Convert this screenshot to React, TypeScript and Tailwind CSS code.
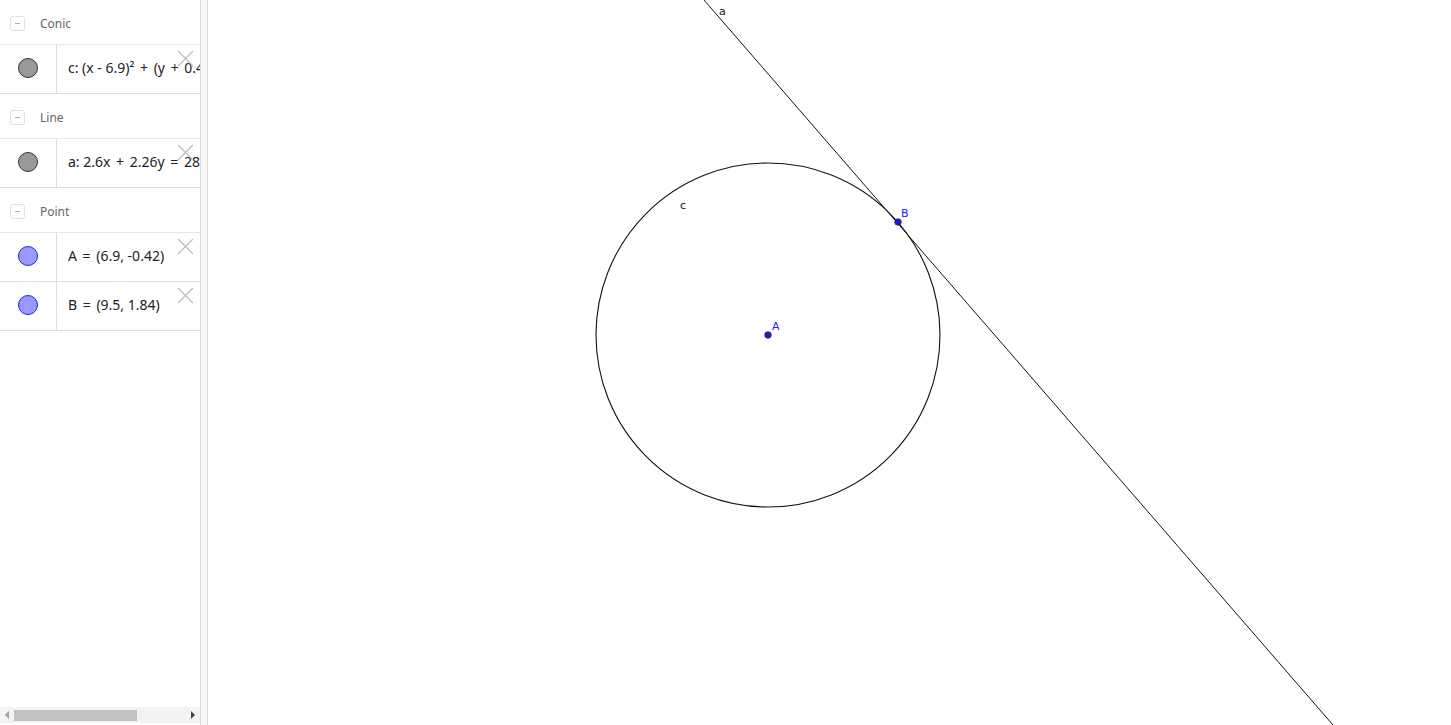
import React from 'react'

// ── Algebra view data ─────────────────────────────────────────────────────────
type Item = { text: string; kind: 'conic' | 'point' }
type Group = { title: string; items: Item[] }

const groups: Group[] = [
  { title: 'Conic', items: [{ text: 'c: (x - 6.9)² + (y + 0.42)² = 29.66', kind: 'conic' }] },
  { title: 'Line', items: [{ text: 'a: 2.6x + 2.26y = 28.8', kind: 'conic' }] },
  {
    title: 'Point',
    items: [
      { text: 'A = (6.9, -0.42)', kind: 'point' },
      { text: 'B = (9.5, 1.84)', kind: 'point' },
    ],
  },
]

// operators get a little extra room, like the math rendering in the reference
function Formula({ text }: { text: string }) {
  const parts = text.split(/( [+=] )/)
  return (
    <span>
      {parts.map((p, i) =>
        p === ' + ' || p === ' = ' ? (
          <span key={i} className="mx-[2px]">
            {p}
          </span>
        ) : (
          <span key={i}>{p}</span>
        ),
      )}
    </span>
  )
}

function Toggle() {
  return (
    <div className="w-[15px] h-[15px] rounded-[3px] border border-[#e0e0e0] flex items-center justify-center">
      <div className="w-[5px] h-px bg-[#b0b0b0]" />
    </div>
  )
}

function DeleteX() {
  return (
    <svg width="17" height="17" viewBox="0 0 17 17" className="absolute right-[6px] top-[5px]">
      <path d="M1 1 L16 16 M16 1 L1 16" stroke="#bdbdbd" strokeWidth="1.3" />
    </svg>
  )
}

function Row({ item }: { item: Item }) {
  const icon =
    item.kind === 'point'
      ? 'bg-[#9999ff] border-[#2222ee]'
      : 'bg-[#999999] border-[#333333]'
  return (
    <div className="relative h-[49px] flex pb-[3px] border-b border-[#dedede]">
      <div className="w-[57px] shrink-0 flex items-center justify-center border-r border-[#dedede] -mb-[3px] pb-[3px]">
        <div className={`w-[20px] h-[20px] rounded-full border ${icon}`} />
      </div>
      <div className="flex-1 overflow-hidden whitespace-nowrap flex items-center pl-[11px] text-[14px] text-[#222]">
        <Formula text={item.text} />
      </div>
      <DeleteX />
    </div>
  )
}

function AlgebraView() {
  return (
    <div className="w-[200px] shrink-0 h-full flex flex-col bg-white">
      <div className="flex-1 overflow-hidden">
        {groups.map((g) => (
          <div key={g.title}>
            <div className="h-[45px] flex items-center gap-[15px] pl-[10px] pt-[3px] border-b border-[#e6e6e6] text-[12px] text-[#666]">
              <Toggle />
              <span>{g.title}</span>
            </div>
            {g.items.map((it) => (
              <Row key={it.text} item={it} />
            ))}
          </div>
        ))}
      </div>
      {/* horizontal scrollbar */}
      <div className="h-[16px] mb-[2px] flex items-center bg-[#f3f3f3]">
        <div className="w-[14px] flex justify-center">
          <div className="w-0 h-0 border-y-[4px] border-y-transparent border-r-[4px] border-r-[#a0a0a0]" />
        </div>
        <div className="w-[123px] h-[11px] bg-[#c2c2c2]" />
        <div className="flex-1" />
        <div className="w-[14px] flex justify-center">
          <div className="w-0 h-0 border-y-[4px] border-y-transparent border-l-[4px] border-l-[#444]" />
        </div>
      </div>
    </div>
  )
}

// ── Graphics view ─────────────────────────────────────────────────────────────
function Graphics() {
  // svg origin sits at page x = 208
  const ox = 208
  return (
    <div className="relative flex-1 h-full bg-white overflow-hidden">
      <svg width="1243" height="725" className="absolute left-0 top-0">
        <line x1={704 - ox} y1={0} x2={1333 - ox} y2={725} stroke="#111" strokeWidth="1" />
        <circle cx={768 - ox} cy={335} r={172} fill="none" stroke="#111" strokeWidth="1.1" />
        <circle cx={768 - ox} cy={335} r={3.3} fill="#1c1cc8" stroke="#333" strokeWidth="0.8" />
        <circle cx={898 - ox} cy={222} r={3.3} fill="#1c1cc8" stroke="#333" strokeWidth="0.8" />
        <g fontFamily="'DejaVu Sans', sans-serif" fontSize="11">
          <text x={719 - ox} y={15} fill="#111">a</text>
          <text x={680 - ox} y={209} fill="#111">c</text>
          <text x={901 - ox} y={217} fill="#1a1aff">B</text>
          <text x={772 - ox} y={330} fill="#1a1aff">A</text>
        </g>
      </svg>
    </div>
  )
}

export default function App() {
  return (
    <div
      className="w-[1451px] h-[725px] flex overflow-hidden bg-white"
      style={{ fontFamily: "'Noto Sans', 'DejaVu Sans', sans-serif" }}
    >
      <AlgebraView />
      <div className="w-[8px] shrink-0 h-full bg-[#f6f6f6] border-x border-[#dcdcdc]" />
      <Graphics />
    </div>
  )
}
